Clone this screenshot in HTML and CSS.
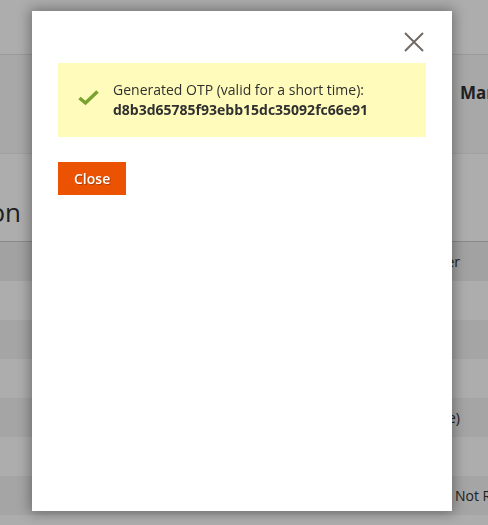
FILE: index.html
```html
<!DOCTYPE html>
<html lang="en">
<head>
    <meta charset="UTF-8">
    <meta name="viewport" content="width=device-width, initial-scale=1.0">
    <title>Two-Factor Authentication</title>
    <link rel="stylesheet" href="styles.css">
</head>
<body>
    <div class="page">
        <header class="page-header"></header>

        <div class="page-actions">
            <span class="section-label">Manage</span>
        </div>

        <div class="page-title-row">
            <div class="page-title-wrap">
                <h1 class="page-title">Two-Factor Authentication Configuration</h1>
            </div>
        </div>

        <div class="grid">
            <div class="grid-row grid-head"><span class="cell cell-end">Provider</span></div>
            <div class="grid-row"></div>
            <div class="grid-row"></div>
            <div class="grid-row"></div>
            <div class="grid-row"><span class="cell cell-end">(Active)</span></div>
            <div class="grid-row"></div>
            <div class="grid-row"><span class="cell cell-start">Not Required</span></div>
            <div class="grid-row"></div>
        </div>
    </div>

    <div class="modals-overlay"></div>

    <aside class="modal-popup">
        <header class="modal-header">
            <button class="action-close" type="button" aria-label="Close">
                <svg width="20" height="20" viewBox="0 0 20 20">
                    <path d="M1 1 L19 19 M19 1 L1 19" stroke="#736963" stroke-width="2" fill="none"/>
                </svg>
            </button>
        </header>

        <div class="modal-content">
            <div class="message message-success">
                <svg class="message-icon" width="24" height="18" viewBox="0 0 24 18">
                    <polyline points="2.5,8 8.5,13 20.5,1.5" stroke="#79a22e" stroke-width="3.5" fill="none"/>
                </svg>
                <div class="message-text">
                    Generated OTP (valid for a short time):<br>
                    <strong>d8b3d65785f93ebb15dc35092fc66e91</strong>
                </div>
            </div>

            <button class="action-primary" type="button">Close</button>
        </div>
    </aside>
</body>
</html>
```

FILE: styles.css
```css
* {
    box-sizing: border-box;
    margin: 0;
    padding: 0;
}

body {
    font-family: 'Open Sans', 'Liberation Sans', sans-serif;
    font-size: 14px;
    color: #303030;
    background: #ffffff;
    overflow: hidden;
}

/* page under the modal */
.page-header {
    height: 55px;
    background: #ffffff;
    border-bottom: 1px solid #e3e3e3;
}

.page-actions {
    height: 98px;
    background: #f8f8f8;
    display: flex;
    align-items: center;
    padding-left: 460px;
    padding-bottom: 24px;
}

.section-label {
    font-size: 17px;
    font-weight: 700;
    white-space: nowrap;
}

.page-title-row {
    height: 88px;
    display: flex;
    align-items: center;
    padding-top: 28px;
    border-top: 1px solid #eeeeee;
}

.page-title-wrap {
    width: 21px;
    display: flex;
    justify-content: flex-end;
}

.page-title {
    font-size: 26px;
    font-weight: 400;
    white-space: nowrap;
}

.grid {
    border-top: 1px solid #cccccc;
}

.grid-row {
    height: 39px;
    display: flex;
    align-items: center;
    background: #ffffff;
}

.grid-row:nth-child(odd) {
    background: #f3f3f3;
}

.grid-head {
    height: 39px;
    background: #efefef !important;
}

.cell {
    white-space: nowrap;
}

.cell-end {
    width: 460px;
    text-align: right;
}

.cell-start {
    padding-left: 455px;
}

/* modal */
.modals-overlay {
    position: fixed;
    inset: 0;
    background: rgba(0, 0, 0, 0.32);
}

.modal-popup {
    position: fixed;
    left: 32px;
    top: 11px;
    width: 420px;
    height: 500px;
    background: #ffffff;
    box-shadow: 0 0 12px 2px rgba(0, 0, 0, 0.35);
}

.modal-header {
    height: 52px;
    display: flex;
    justify-content: flex-end;
    padding: 21px 28px 0 0;
}

.action-close {
    width: 20px;
    height: 20px;
    border: none;
    background: transparent;
    cursor: pointer;
}

.action-close svg {
    display: block;
}

.modal-content {
    padding: 0 26px;
}

.message {
    display: flex;
    align-items: center;
    gap: 12px;
    background: #fffbbb;
    padding: 17px 40px 17px 19px;
    line-height: 20px;
}

.message-icon {
    flex-shrink: 0;
    margin-top: -2px;
}

.message-text strong {
    font-weight: 700;
}

.action-primary {
    margin-top: 25px;
    font-family: 'Open Sans', 'Liberation Sans', sans-serif;
    font-size: 14px;
    font-weight: 600;
    line-height: 19px;
    padding: 6px 15px;
    color: #ffffff;
    background: #eb5202;
    border: 1px solid #eb5202;
    text-shadow: 1px 1px 0 rgba(0, 0, 0, 0.25);
    cursor: pointer;
}
```
